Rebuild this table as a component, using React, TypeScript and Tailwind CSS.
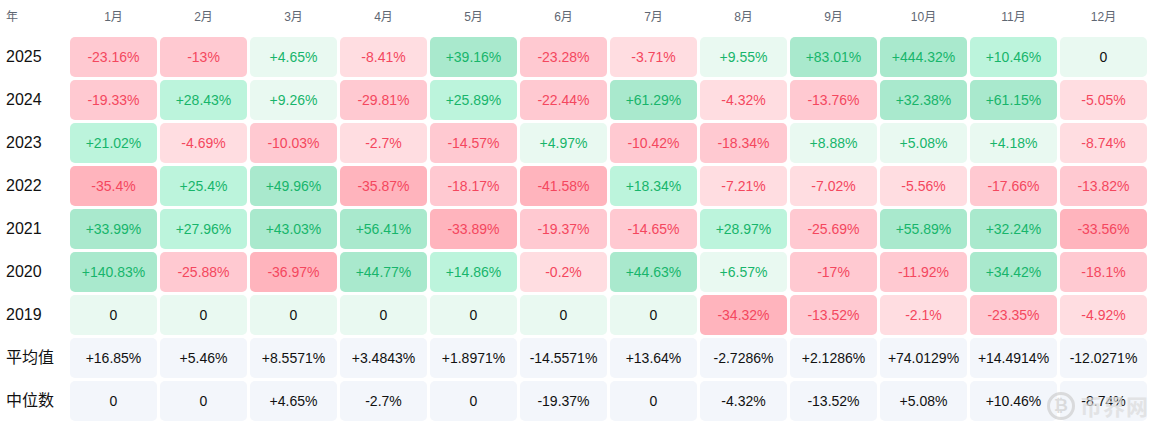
import React from "react";

const months = ["1月", "2月", "3月", "4月", "5月", "6月", "7月", "8月", "9月", "10月", "11月", "12月"];

const data: [string, string[]][] = [
  ["2025", ["-23.16%", "-13%", "+4.65%", "-8.41%", "+39.16%", "-23.28%", "-3.71%", "+9.55%", "+83.01%", "+444.32%", "+10.46%", "0"]],
  ["2024", ["-19.33%", "+28.43%", "+9.26%", "-29.81%", "+25.89%", "-22.44%", "+61.29%", "-4.32%", "-13.76%", "+32.38%", "+61.15%", "-5.05%"]],
  ["2023", ["+21.02%", "-4.69%", "-10.03%", "-2.7%", "-14.57%", "+4.97%", "-10.42%", "-18.34%", "+8.88%", "+5.08%", "+4.18%", "-8.74%"]],
  ["2022", ["-35.4%", "+25.4%", "+49.96%", "-35.87%", "-18.17%", "-41.58%", "+18.34%", "-7.21%", "-7.02%", "-5.56%", "-17.66%", "-13.82%"]],
  ["2021", ["+33.99%", "+27.96%", "+43.03%", "+56.41%", "-33.89%", "-19.37%", "-14.65%", "+28.97%", "-25.69%", "+55.89%", "+32.24%", "-33.56%"]],
  ["2020", ["+140.83%", "-25.88%", "-36.97%", "+44.77%", "+14.86%", "-0.2%", "+44.63%", "+6.57%", "-17%", "-11.92%", "+34.42%", "-18.1%"]],
  ["2019", ["0", "0", "0", "0", "0", "0", "0", "-34.32%", "-13.52%", "-2.1%", "-23.35%", "-4.92%"]],
];

const summary: [string, string[]][] = [
  ["平均值", ["+16.85%", "+5.46%", "+8.5571%", "+3.4843%", "+1.8971%", "-14.5571%", "+13.64%", "-2.7286%", "+2.1286%", "+74.0129%", "+14.4914%", "-12.0271%"]],
  ["中位数", ["0", "0", "+4.65%", "-2.7%", "0", "-19.37%", "0", "-4.32%", "-13.52%", "+5.08%", "+10.46%", "-8.74%"]],
];

function cellClass(v: string): string {
  const n = parseFloat(v);
  if (n === 0) return "bg-[#e9f9f1] text-[#111]";
  if (n > 0) {
    if (n >= 30) return "bg-[#a9e9cd] text-[#17b56b]";
    if (n >= 10) return "bg-[#bcf4dc] text-[#17b56b]";
    return "bg-[#e9f9f1] text-[#17b56b]";
  }
  if (n <= -30) return "bg-[#ffb4bd] text-[#f4475e]";
  if (n <= -10) return "bg-[#ffc9d1] text-[#f4475e]";
  return "bg-[#ffdde1] text-[#f4475e]";
}

export default function App() {
  return (
    <div className="relative w-[1160px] h-[430px] bg-white overflow-hidden" style={{ fontFamily: '"Liberation Sans", Arial, "Noto Sans CJK SC", sans-serif' }}>
      <div className="grid grid-cols-[61px_repeat(12,87px)] grid-rows-[34px] auto-rows-[40px] gap-[3px] pl-[6px]">
        <div className="flex items-center text-[12px] text-[#5f6773]">年</div>
        {months.map((m) => (
          <div key={m} className="flex items-center justify-center text-[12px] text-[#5f6773]">
            {m}
          </div>
        ))}
        {data.map(([year, vals]) => (
          <React.Fragment key={year}>
            <div className="flex items-center text-[16px] text-[#111]">{year}</div>
            {vals.map((v, i) => (
              <div key={i} className={`flex items-center justify-center rounded-[5px] text-[14px] ${cellClass(v)}`}>
                {v}
              </div>
            ))}
          </React.Fragment>
        ))}
        {summary.map(([label, vals]) => (
          <React.Fragment key={label}>
            <div className="flex items-center text-[16px] text-[#111]">{label}</div>
            {vals.map((v, i) => (
              <div key={i} className="flex items-center justify-center rounded-[5px] bg-[#f3f6fb] text-[14px] text-[#111]">
                {v}
              </div>
            ))}
          </React.Fragment>
        ))}
      </div>
      <div className="absolute left-[1047px] top-[389px] flex items-center gap-[5px] opacity-70 pointer-events-none">
        <div className="w-[28px] h-[28px] rounded-full border-[3px] border-[#cfcfcf] flex items-center justify-center text-[#cfcfcf] text-[17px] font-bold">
          ₿
        </div>
        <div className="text-[22px] font-bold text-[#dcdcdc] tracking-[1px]" style={{ fontFamily: '"Noto Sans CJK SC", sans-serif' }}>
          币界网
        </div>
      </div>
    </div>
  );
}
